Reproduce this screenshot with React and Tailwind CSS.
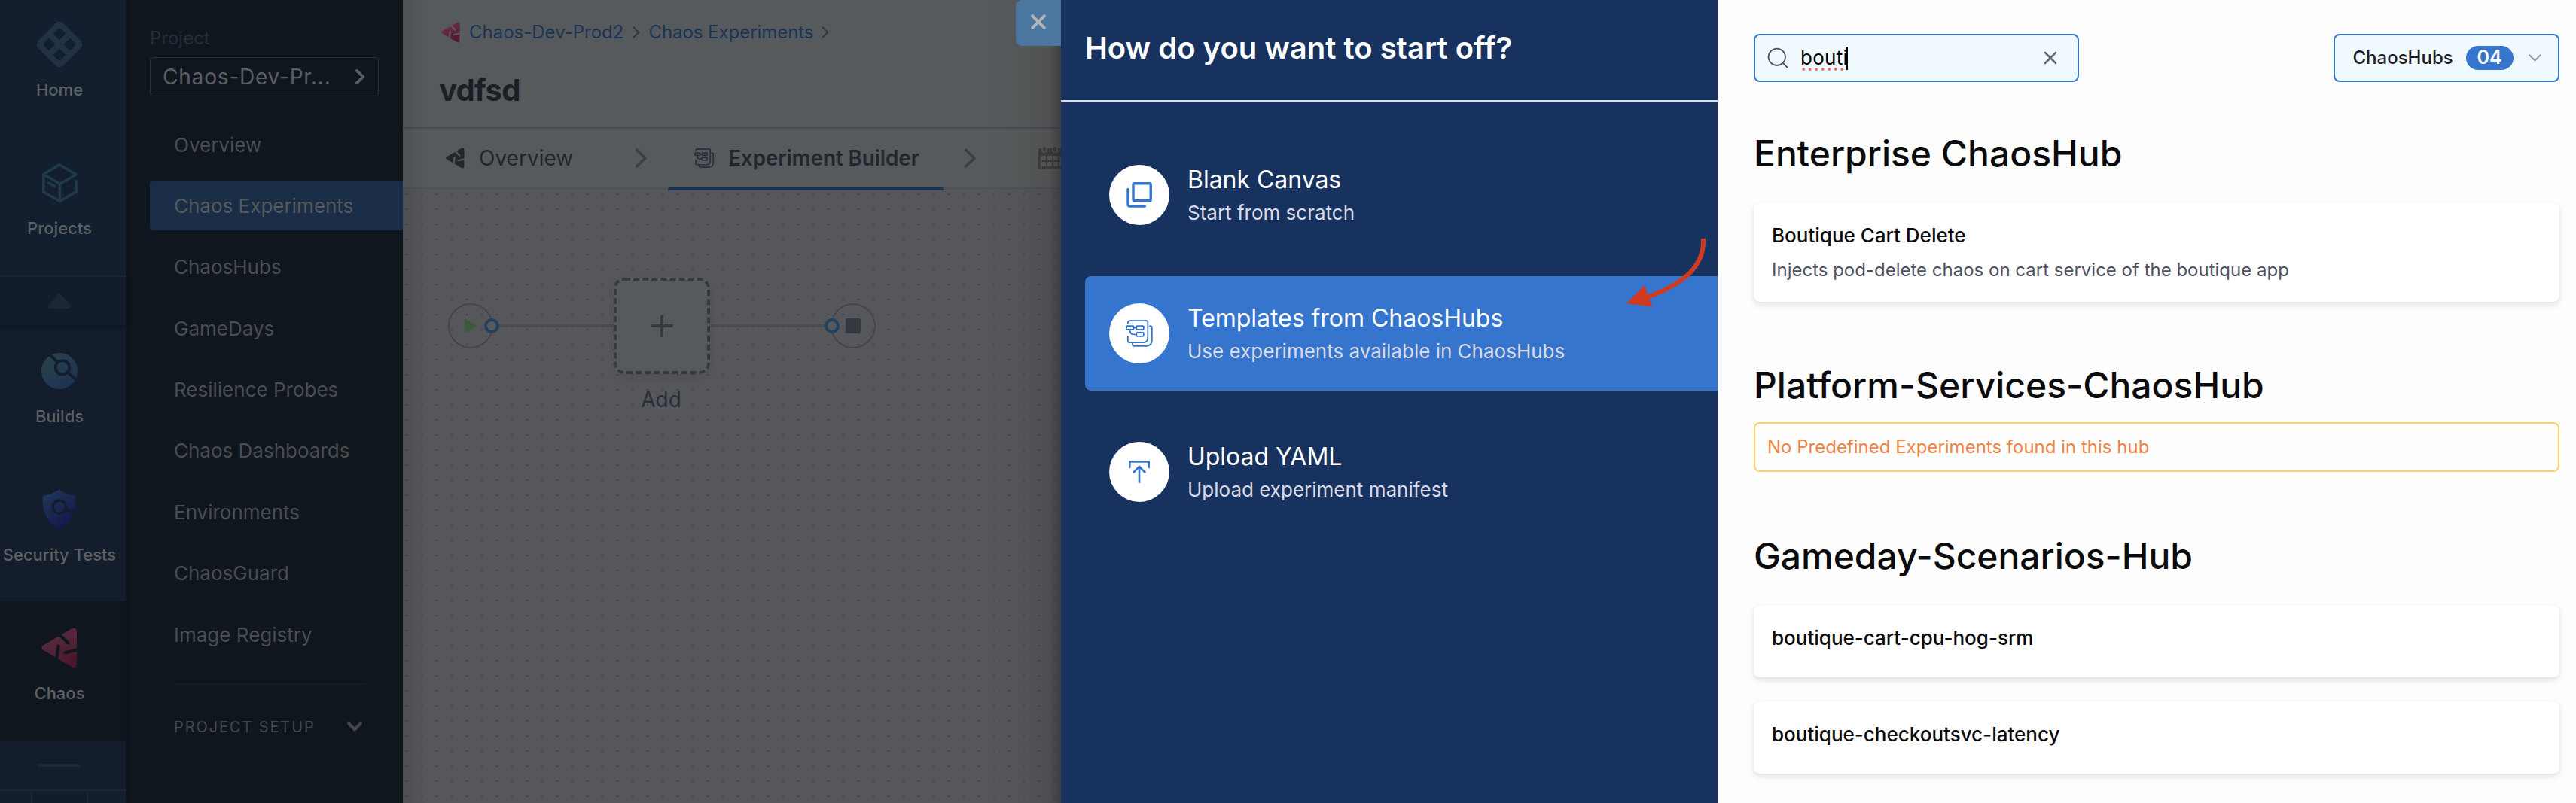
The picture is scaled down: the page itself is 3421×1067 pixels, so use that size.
import React, { useId } from 'react';

function ChaosMark({ className, from, to }) {
  const id = useId();
  return (
    <svg viewBox="6 3 48 54" className={className} fill="none">
      <defs>
        <linearGradient id={`${id}g`} x1="0" y1="0" x2="0.6" y2="1">
          <stop offset="0" stopColor={from} />
          <stop offset="1" stopColor={to} />
        </linearGradient>
        <mask id={`${id}m`} maskUnits="userSpaceOnUse" x="0" y="0" width="60" height="60">
          <rect width="60" height="60" fill="white" />
          <g stroke="black" strokeWidth="4.2" strokeLinecap="round">
            <path d="M28 10.5 L41.5 23.5" />
            <path d="M28.5 27.5 L26 46" />
            <path d="M37.5 36.2 L56 32" />
          </g>
        </mask>
      </defs>
      <path
        mask={`url(#${id}m)`}
        fill={`url(#${id}g)`}
        d="M8.5 26.5 L46 4.5 Q53 1.5 53 9 L53 51 Q53 58.5 46 55 L8.5 33 Q4 30 8.5 26.5 Z"
      />
    </svg>
  );
}

function HomeIcon() {
  return (
    <svg viewBox="0 0 60 60" className="size-[60px]">
      <g transform="rotate(45 30 30)">
        <path
          fill="#223246"
          fillRule="evenodd"
          d="M15 6.5 H45 Q53.5 6.5 53.5 15 V45 Q53.5 53.5 45 53.5 H15 Q6.5 53.5 6.5 45 V15 Q6.5 6.5 15 6.5 Z
             M18 14 Q14 14 14 18 V26 H26 V14 Z M34 14 V26 H46 V18 Q46 14 42 14 Z
             M14 34 V42 Q14 46 18 46 H26 V34 Z M34 34 V46 H42 Q46 46 46 42 V34 Z"
        />
      </g>
    </svg>
  );
}

function CubeIcon() {
  return (
    <svg viewBox="0 0 60 60" className="size-[60px]" fill="none" stroke="#203a49" strokeWidth="3.6" strokeLinejoin="round" strokeLinecap="round">
      <path d="M52.2 27.5 V41.8 L30.5 54.4 L8.7 42 V18.5 L29.8 5.8 L52.2 19 L30.5 31.2 L8.7 18.5" />
      <path d="M30.5 31.2 V54.4" />
      <path d="M15.6 30 L23.5 34.4" />
    </svg>
  );
}

function BuildsIcon() {
  return (
    <svg viewBox="0 0 60 60" className="size-[60px]" fill="none">
      <defs>
        <linearGradient id="builds" x1="0.1" y1="0.1" x2="0.75" y2="1">
          <stop offset="0" stopColor="#29434a" />
          <stop offset="1" stopColor="#1b3254" />
        </linearGradient>
      </defs>
      <circle cx="30" cy="30" r="24" fill="url(#builds)" />
      <path d="M15 6 L27 18 M41 32 L56 45" stroke="#131d2b" strokeWidth="4" />
      <circle cx="34" cy="25.3" r="9.2" stroke="#131d2b" strokeWidth="3.8" />
    </svg>
  );
}

function ShieldIcon() {
  return (
    <svg viewBox="0 0 60 60" className="size-[60px]" fill="none">
      <defs>
        <linearGradient id="shield" x1="0.1" y1="0" x2="0.7" y2="0.9">
          <stop offset="0" stopColor="#21385a" />
          <stop offset="1" stopColor="#17184a" />
        </linearGradient>
      </defs>
      <path
        fill="url(#shield)"
        d="M29.5 3.500 C36 8 41 10 49 11.2 Q51.2 11.6 51.2 14 C51.4 34 44.5 50 29.7 56 C15 50 7.3 34 7.5 14 Q7.5 11.6 9.7 11.2 C18 10 23 8 29.5 3.500 Z"
      />
      <circle cx="29.8" cy="26.6" r="8.6" stroke="#131d2b" strokeWidth="3.4" />
      <path d="M38 29.8 L52 34.6" stroke="#131d2b" strokeWidth="3.4" />
    </svg>
  );
}

function TemplateIcon({ className, width = 1.8 }) {
  return (
    <svg viewBox="0 0 36 36" className={className} fill="none" stroke="currentColor" strokeWidth={width} strokeLinejoin="round" strokeLinecap="round">
      <path d="M2.800 4.500 Q2.800 1.200 6 1.200 H27.500 Q29.300 1.200 29.300 3.200 V23.500 Q29.300 30.200 23.500 30.200 H5.500 Q2.800 30.200 2.800 28 V22" />
      <path d="M9 31 V32.500 Q9 34.800 11.500 34.800 H27 Q34.800 34.300 34.800 27 V10.500 Q34.800 8.200 32 8.200" />
      <rect x="1" y="8.200" width="9.500" height="4.800" rx="0.800" />
      <rect x="14.300" y="8.200" width="9.500" height="4.800" rx="0.800" />
      <rect x="14.300" y="16.800" width="9.500" height="5" rx="0.800" />
      <path d="M10.500 10.600 H14.300 M5.500 13 Q5.500 19.300 10 19.300 H14.300" />
    </svg>
  );
}

function Chevron({ className, width }) {
  return (
    <svg viewBox="0 0 10 16" className={className} fill="none" stroke="currentColor" strokeWidth={width} strokeLinecap="round" strokeLinejoin="round">
      <path d="M1.5 1.5 L8.2 8 L1.5 14.5" />
    </svg>
  );
}

function RailTile({ label, icon, className }) {
  return (
    <div className={`flex w-[167px] shrink-0 flex-col items-center pr-[9px] ${className}`}>
      <div className="flex size-[60px] shrink-0 items-center justify-center">{icon}</div>
      <div className="mt-[17px] text-[22px] leading-[26px] font-medium whitespace-nowrap text-[#5c6062]">{label}</div>
    </div>
  );
}

function Rail() {
  return (
    <div className="flex h-full w-[167px] shrink-0 flex-col bg-[#131d2b]">
      <div className="h-[366px] shrink-0 bg-[#131f2e]">
        <RailTile label="Home" icon={<HomeIcon />} className="h-[184px] pt-[29px]" />
        <RailTile label="Projects" icon={<CubeIcon />} className="h-[182px] pt-[29px]" />
      </div>
      <div className="z-10 flex h-[66px] shrink-0 items-start justify-center border-t-2 border-[#1b2431] bg-[#131c2a] pt-[22px] pr-[9px] shadow-[0_3px_6px_rgba(8,14,20,0.5)]">
        <svg viewBox="0 0 30 20" className="h-[20px] w-[30px]">
          <path fill="#1d2732" d="M13 1 Q15 -1 17 1 L29 15 Q31 20 27 20 H3 Q-1 20 1 15 Z" />
        </svg>
      </div>
      <RailTile label="Builds" icon={<BuildsIcon />} className="h-[184px] pt-[31px]" />
      <RailTile label="Security Tests" icon={<ShieldIcon />} className="h-[183px] pt-[31px]" />
      <RailTile
        label="Chaos"
        icon={<ChaosMark className="h-[54px] w-[48px]" from="#5b3448" to="#4a1729" />}
        className="h-[185px] bg-[#0f161e] pt-[32px]"
      />
      <div className="flex h-[65px] shrink-0 items-center justify-center pr-[9px]">
        <div className="h-[4px] w-[56px] bg-[#1e2832]" />
      </div>
      <div className="flex grow border-t-2 border-[#1b2634] bg-[#131f2e]">
        <div className="w-[41px]" />
        <div className="w-[76px] border-x-2 border-[#1b2634] bg-[#131c2a]" />
      </div>
    </div>
  );
}

const NAV = [
  'Overview',
  'Chaos Experiments',
  'ChaosHubs',
  'GameDays',
  'Resilience Probes',
  'Chaos Dashboards',
  'Environments',
  'ChaosGuard',
  'Image Registry',
];

function SideNav() {
  return (
    <div className="flex h-full w-[368px] shrink-0 flex-col bg-[linear-gradient(to_right,#0d141b_6px,#0f161e_6px)] pt-[37px] pl-[32px]">
      <div className="text-[24px] leading-[28px] text-[#282c37]">Project</div>
      <div className="mt-[11px] flex h-[52px] w-[304px] items-center justify-between rounded-[4px] border border-[#2c2f3a] pr-[18px] pl-[16px]">
        <span className="text-[28px] leading-[40px] tracking-[0.8px] text-[#5b5f62]">Chaos-Dev-Pr...</span>
        <Chevron className="h-[20px] w-[12.5px] text-[#5b5f62]" width={3} />
      </div>
      <nav className="mt-[31px] flex flex-col gap-[15.4px]">
        {NAV.map((item) => (
          <div
            key={item}
            className={`flex h-[66px] items-center rounded-l-[4px] pl-[32px] text-[26px] whitespace-nowrap ${
              item === 'Chaos Experiments' ? 'bg-[#1a2d47] text-[#55595c]' : 'text-[#4a4d50]'
            }`}
          >
            {item}
          </div>
        ))}
      </nav>
      <div className="mt-[32px] ml-[32px] h-[2px] w-[256px] bg-[#151d26]" />
      <div className="mt-[42px] ml-[32px] flex h-[28px] w-[250px] items-center justify-between text-[#44474a]">
        <span className="text-[20px] tracking-[1.9px]">PROJECT SETUP</span>
        <svg viewBox="0 0 20 14" className="h-[14px] w-[20px]" fill="none" stroke="currentColor" strokeWidth="4" strokeLinecap="round" strokeLinejoin="round">
          <path d="M2.2 2.5 L10 10.5 L17.8 2.5" />
        </svg>
      </div>
    </div>
  );
}

function CalendarIcon() {
  return (
    <svg viewBox="0 0 34 32" className="h-[32px] w-[34px] shrink-0 text-[#3b3e41]">
      <path
        fill="currentColor"
        fillRule="evenodd"
        d="M2 4 H32 Q34 4 34 6 V30 Q34 32 32 32 H2 Q0 32 0 30 V6 Q0 4 2 4 Z
           M4 14 V20 H10 V14 Z M12 14 V20 H18 V14 Z M20 14 V20 H26 V14 Z M28 14 V20 H34 V14 Z
           M4 22 V28 H10 V22 Z M12 22 V28 H18 V22 Z M20 22 V28 H26 V22 Z M28 22 V28 H34 V22 Z"
      />
      <g fill="currentColor" stroke="#56585a" strokeWidth="1.6">
        <rect x="5" y="1.500" width="6" height="8" rx="3" />
        <rect x="19" y="1.500" width="6" height="8" rx="3" />
      </g>
    </svg>
  );
}

function Node({ className, children }) {
  return (
    <div className={`absolute flex size-[60px] items-center justify-center rounded-full border-2 border-[#43464d] ${className}`}>
      {children}
    </div>
  );
}

function Canvas() {
  return (
    <div className="relative grow bg-[#55575b] bg-[radial-gradient(circle,#42454a_1px,transparent_1.4px)] bg-[length:20px_20px] bg-[position:-5px_-1px] shadow-[inset_0_2px_2px_rgba(0,0,0,0.06)]">
      <div className="absolute top-[182px] left-[127px] h-[4px] w-[160px] bg-[#4a4d4e]" />
      <div className="absolute top-[182px] left-[405px] h-[4px] w-[160px] bg-[#4a4d4e]" />
      <Node className="top-[154px] left-[60px]">
        <svg viewBox="0 0 16 20" className="h-[20px] w-[16px]">
          <path fill="#3d5a3d" d="M0 1.5 Q0 -0.5 2 1 L15 9 Q16.5 10 15 11 L2 19 Q0 20.5 0 18.5 Z" />
        </svg>
      </Node>
      <Node className="top-[154px] left-[568px]">
        <div className="size-[20px] rounded-[2px] bg-[#353841]" />
      </Node>
      <div className="absolute top-[174px] left-[108px] size-[20px] rounded-full border-4 border-[#23425f] bg-[#575a5c]" />
      <div className="absolute top-[174px] left-[560px] size-[20px] rounded-full border-4 border-[#23425f] bg-[#575a5c]" />
      <div className="absolute top-[120px] left-[280px] flex size-[128px] items-center justify-center rounded-[12px] bg-[#575a5c] shadow-[0_4px_10px_rgba(0,0,0,0.08)]">
        <svg viewBox="0 0 128 128" className="size-[128px]" fill="none" stroke="#363943" strokeWidth="4">
          <rect x="2" y="2" width="124" height="124" rx="12" strokeDasharray="8.06 4.03" />
          <path d="M51 64 H77 M64 51 V77" strokeLinecap="round" />
        </svg>
      </div>
      <div className="absolute top-[262px] left-[279px] w-[128px] text-center text-[28px] leading-[40px] text-[#2b2d39]">Add</div>
    </div>
  );
}

function Content() {
  return (
    <div className="relative flex h-full w-[874px] shrink-0 flex-col overflow-hidden bg-[#575a5c]">
      <div className="flex h-[171px] shrink-0 flex-col border-b-2 border-[#4a4d54] pt-[28px] pl-[51px]">
        <div className="flex h-[30px] items-center text-[24px] leading-[30px] whitespace-nowrap text-[#1a3556]">
          <ChaosMark className="mr-[12px] h-[28px] w-[25px]" from="#723a50" to="#561730" />
          <span>Chaos-Dev-Prod2</span>
          <Chevron className="mr-[11px] ml-[12px] h-[16px] w-[10px] text-[#34363f]" width={2} />
          <span className="tracking-[-0.05px]">Chaos Experiments</span>
          <Chevron className="ml-[11px] h-[16px] w-[10px] text-[#34363f]" width={2} />
        </div>
        <div className="mt-[38px] ml-[-3px] text-[40px] leading-[48px] font-bold tracking-[-0.7px] text-[#1c1f26]">vdfsd</div>
      </div>
      <div className="flex h-[78px] shrink-0 text-[28px] whitespace-nowrap text-[#23252f]">
        <div className="flex w-[308px] items-center pl-[57px]">
          <ChaosMark className="mr-[19px] h-[28px] w-[25px]" from="#23252f" to="#23252f" />
          <span>Overview</span>
        </div>
        <div className="flex w-[44px] items-center">
          <Chevron className="h-[28px] w-[17px] text-[#3b3e48]" width={2.1} />
        </div>
        <div className="relative flex w-[366px] items-center pl-[35px]">
          <TemplateIcon className="mr-[19px] size-[26px] text-[#2a2d37]" width={2.2} />
          <span className="font-semibold tracking-[-0.18px]">Experiment Builder</span>
          <div className="absolute inset-x-0 top-[78px] z-10 h-[4px] rounded-t-[3px] bg-[#183254]" />
        </div>
        <div className="flex w-[126px] items-center pl-[27px]">
          <Chevron className="h-[28px] w-[17px] text-[#3b3e48]" width={2.1} />
        </div>
        <div className="flex w-[30px] items-center overflow-hidden pb-[2px]">
          <CalendarIcon />
        </div>
      </div>
      <Canvas />
      <div className="absolute inset-y-0 left-0 w-[36px] bg-[linear-gradient(to_right,rgba(0,0,0,0.09),transparent)]" />
      <div className="absolute inset-y-0 right-0 w-[110px] bg-[linear-gradient(to_left,rgba(25,22,22,0.38),rgba(40,38,38,0.17)_16px,rgba(50,48,48,0.08)_50px,transparent)]" />
      <div className="absolute top-0 right-0 flex h-[61px] w-[60px] items-center justify-center rounded-l-[8px] bg-[#4b769f] pb-[3px]">
        <svg viewBox="0 0 20 20" className="size-[20px]" fill="none" stroke="#b2b4b5" strokeWidth="4" strokeLinecap="round">
          <path d="M2.2 2.2 L17.8 17.8 M17.8 2.2 L2.2 17.8" />
        </svg>
      </div>
    </div>
  );
}

function CopyIcon() {
  return (
    <svg viewBox="0 0 34 34" className="size-[34px]" fill="none" stroke="#3575ce" strokeWidth="3.4" strokeLinejoin="round" strokeLinecap="round">
      <rect x="9" y="1.8" width="23.2" height="23" rx="1.5" />
      <path d="M2 9.5 V29.5 Q2 32 4.5 32 H24.5" />
    </svg>
  );
}

function UploadIcon() {
  return (
    <svg viewBox="0 0 28 30" className="h-[30px] w-[28px]" fill="none" stroke="#3575ce" strokeWidth="2.6" strokeLinecap="round">
      <path d="M1.3 9 V1.5 H26.7 V9" strokeLinejoin="miter" />
      <path d="M14 29 V9 M6.5 15.5 L14 7.8 L21.5 15.5" strokeLinejoin="round" />
    </svg>
  );
}

const OPTIONS = [
  { title: 'Blank Canvas', text: 'Start from scratch', icon: <CopyIcon /> },
  {
    title: 'Templates from ChaosHubs',
    text: 'Use experiments available in ChaosHubs',
    icon: <TemplateIcon className="size-[36px] text-[#3575ce]" />,
    active: true,
  },
  { title: 'Upload YAML', text: 'Upload experiment manifest', icon: <UploadIcon /> },
];

function Drawer() {
  return (
    <div className="relative flex h-full w-[872px] shrink-0 flex-col bg-[#18325f]">
      <div className="h-[135px] shrink-0 border-b-2 border-[#dcdde6] pt-[40px] pl-[32px] text-[40px] leading-[48px] font-semibold text-white">
        How do you want to start off?
      </div>
      <div className="mt-[48px] flex flex-col gap-[32px] pl-[32px]">
        {OPTIONS.map((o) => (
          <div key={o.title} className={`flex h-[152px] items-center gap-[24px] rounded-l-[8px] pl-[32px] ${o.active ? 'bg-[#3575ce]' : ''}`}>
            <div className="flex size-[80px] items-center justify-center rounded-full bg-white">{o.icon}</div>
            <div className="flex flex-col gap-2 whitespace-nowrap">
              <div className="text-[32px] leading-[40px] tracking-[-0.03px] text-white">{o.title}</div>
              <div className="text-[26px] leading-[32px] text-[#d9dae5]">{o.text}</div>
            </div>
          </div>
        ))}
      </div>
      <svg viewBox="0 0 120 100" className="absolute top-[313px] left-[747px] h-[100px] w-[120px]" fill="none">
        <path d="M106 4 C108 42 76 66 33 81" stroke="#d23a20" strokeWidth="6" />
        <path d="M4 90 L28 66 L38 94.500 Z" fill="#d23a20" />
      </svg>
    </div>
  );
}

function Card({ title, text, className }) {
  return (
    <div className={`flex flex-col rounded-[8px] bg-white pl-[24px] shadow-[0_0_2px_rgba(40,41,61,0.06),0_4px_8px_rgba(96,97,112,0.18)] ${className}`}>
      <div className="text-[26px] leading-[32px] font-medium text-[#0b0b0d]">{title}</div>
      {text && <div className="mt-[14px] text-[24px] leading-[32px] text-[#4f5162]">{text}</div>}
    </div>
  );
}

function HubHeading({ children, className }) {
  return <h2 className={`text-[48px] leading-[56px] font-medium text-[#0b0b0d] ${className}`}>{children}</h2>;
}

function Results() {
  return (
    <div className="flex h-full w-[1140px] shrink-0 flex-col bg-[#fefefe] pt-[45px] pr-[22px] pl-[48px]">
      <div className="flex h-[64px] shrink-0 justify-between">
        <div className="flex w-[432px] items-center rounded-[8px] border-2 border-[#3575ce] bg-[#f0f9fd] pr-[27px] pl-[16px]">
          <svg viewBox="0 0 28 28" className="size-[28px]" fill="none" stroke="#4f5162" strokeWidth="1.8" strokeLinecap="round">
            <circle cx="12.800" cy="12.800" r="11.200" />
            <path d="M21 21 L26.500 26.500" />
          </svg>
          <div className="relative ml-[16px] text-[26px] leading-[32px] tracking-[0.3px] text-black">
            bouti
            <div className="absolute top-[29px] left-0 h-[4px] w-[60px] bg-[radial-gradient(circle,#ee6a5f_1.6px,transparent_2.2px)] bg-[length:8.5px_4px]" />
            <div className="absolute top-[1px] left-[61px] h-[31px] w-[2px] bg-black" />
          </div>
          <svg viewBox="0 0 18 18" className="ml-auto size-[18px]" fill="none" stroke="#62657a" strokeWidth="2.6" strokeLinecap="round">
            <path d="M2 2 L16 16 M16 2 L2 16" />
          </svg>
        </div>
        <div className="flex w-[300px] items-center rounded-[8px] border-2 border-[#3575ce] bg-[#f0f9fd] pl-[23.500px]">
          <span className="text-[24px] font-medium text-[#1c1d26]">ChaosHubs</span>
          <span className="ml-[17px] flex h-[32px] w-[63px] items-center justify-center rounded-full bg-[#3575ce] text-[25px] font-semibold text-white">04</span>
          <svg viewBox="0 0 17 10" className="ml-[20px] h-[10px] w-[17px]" fill="none" stroke="#9698a8" strokeWidth="2" strokeLinecap="round" strokeLinejoin="round">
            <path d="M1.200 1.200 L8.500 8.500 L15.800 1.200" />
          </svg>
        </div>
      </div>

      <HubHeading className="mt-[67px]">Enterprise ChaosHub</HubHeading>
      <Card
        title="Boutique Cart Delete"
        text="Injects pod-delete chaos on cart service of the boutique app"
        className="mt-[37px] h-[132px] shrink-0 pt-[28px]"
      />

      <HubHeading className="mt-[83px]">Platform-Services-ChaosHub</HubHeading>
      <div className="mt-[21px] h-[66px] shrink-0 rounded-[8px] border-2 border-[#f8d35e] pt-[15px] pl-[16px] text-[24px] leading-[32px] text-[#ee8443]">
        No Predefined Experiments found in this hub
      </div>

      <HubHeading className="mt-[84px] tracking-[-0.04px]">Gameday-Scenarios-Hub</HubHeading>
      <Card title="boutique-cart-cpu-hog-srm" className="mt-[37px] h-[96px] shrink-0 pt-[28px]" />
      <Card title="boutique-checkoutsvc-latency" className="mt-[32px] h-[96px] shrink-0 pt-[28px]" />
    </div>
  );
}

export default function App() {
  return (
    <div className="flex h-[1067px] w-[3421px] overflow-hidden bg-white font-['Inter',sans-serif]">
      <Rail />
      <SideNav />
      <Content />
      <Drawer />
      <Results />
    </div>
  );
}
